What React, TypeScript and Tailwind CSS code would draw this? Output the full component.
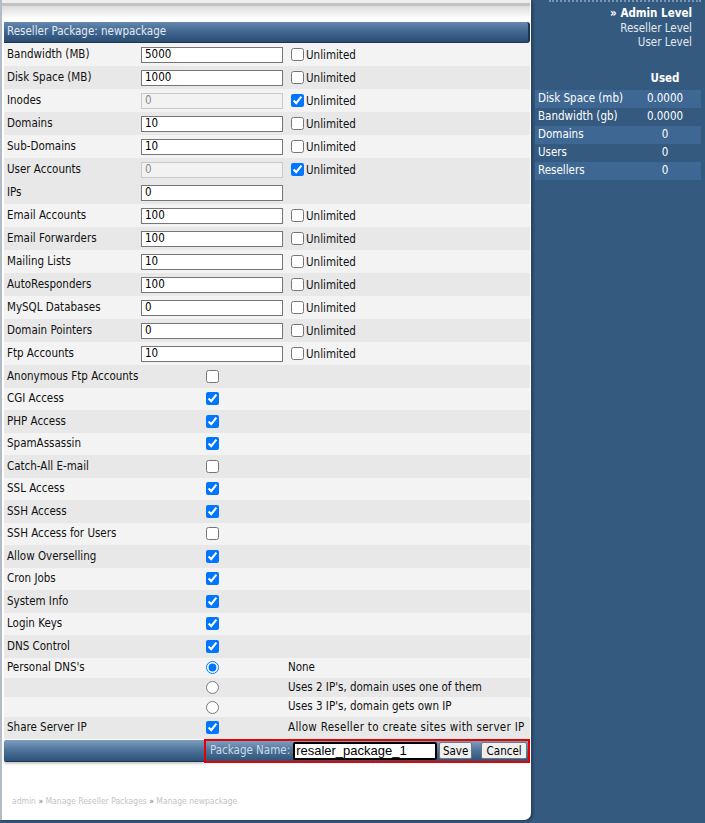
import React from "react";

type Num = { label: string; value: string; unl?: boolean; off?: boolean; dark: boolean };
type Chk = { label: string; on: boolean; dark: boolean };

const numbers: Num[] = [
  { label: "Bandwidth (MB)", value: "5000", unl: false, dark: false },
  { label: "Disk Space (MB)", value: "1000", unl: false, dark: true },
  { label: "Inodes", value: "0", unl: true, off: true, dark: false },
  { label: "Domains", value: "10", unl: false, dark: true },
  { label: "Sub-Domains", value: "10", unl: false, dark: false },
  { label: "User Accounts", value: "0", unl: true, off: true, dark: true },
  { label: "IPs", value: "0", dark: true },
  { label: "Email Accounts", value: "100", unl: false, dark: false },
  { label: "Email Forwarders", value: "100", unl: false, dark: true },
  { label: "Mailing Lists", value: "10", unl: false, dark: false },
  { label: "AutoResponders", value: "100", unl: false, dark: true },
  { label: "MySQL Databases", value: "0", unl: false, dark: false },
  { label: "Domain Pointers", value: "0", unl: false, dark: true },
  { label: "Ftp Accounts", value: "10", unl: false, dark: false },
];

const checks: Chk[] = [
  { label: "Anonymous Ftp Accounts", on: false, dark: true },
  { label: "CGI Access", on: true, dark: false },
  { label: "PHP Access", on: true, dark: true },
  { label: "SpamAssassin", on: true, dark: false },
  { label: "Catch-All E-mail", on: false, dark: true },
  { label: "SSL Access", on: true, dark: false },
  { label: "SSH Access", on: true, dark: true },
  { label: "SSH Access for Users", on: false, dark: false },
  { label: "Allow Overselling", on: true, dark: true },
  { label: "Cron Jobs", on: true, dark: false },
  { label: "System Info", on: true, dark: true },
  { label: "Login Keys", on: true, dark: false },
  { label: "DNS Control", on: true, dark: true },
];

const usage = [
  { label: "Disk Space (mb)", value: "0.0000", alt: true },
  { label: "Bandwidth (gb)", value: "0.0000", alt: false },
  { label: "Domains", value: "0", alt: true },
  { label: "Users", value: "0", alt: false },
  { label: "Resellers", value: "0", alt: true },
];

function Box({ on }: { on: boolean }) {
  return <input type="checkbox" defaultChecked={on} className="m-0 h-[13px] w-[13px]" />;
}

export default function App() {
  return (
    <div className="flex min-h-[823px] bg-[#355a80] font-['DejaVu_Sans_Condensed','DejaVu_Sans',sans-serif] text-[11.5px] text-[#111]">
      {/* main panel */}
      <div className="flex h-[820px] w-[531px] flex-col rounded-br-[7px] border-l-2 border-[#b3bcc6] bg-white pr-[1px] pl-[2px] shadow-[2px_1px_3px_rgba(0,0,0,0.3)]">
        <div className="-ml-[2px] h-[3px] bg-[#eeeeee]" />
        <div className="-ml-[2px] h-[3px] bg-[#c3c3c3]" />
        <div className="-ml-[2px] h-[13px] bg-[linear-gradient(to_bottom,#dcdcdc,#ffffff)]" />
        <div className="h-[3px]" />

        <div className="flex h-[21px] items-center rounded-r-[3px] border-r-2 border-b border-[#1d3550] bg-[linear-gradient(to_bottom,#6688ad_0%,#3f6590_50%,#2a4d72_100%)] pl-[3px] text-[#e2eaf2]">
          Reseller Package: newpackage
        </div>

        {numbers.map((r) => (
          <div key={r.label} className={`flex h-[23px] items-center ${r.dark ? "bg-[#e8e8e8]" : "bg-[#f3f3f3]"}`}>
            <div className="w-[137px] pl-[3px]">{r.label}</div>
            <div className="w-[146px]">
              <input
                readOnly
                value={r.value}
                className={`h-[16px] w-[142px] border px-[3px] text-[11.5px] outline-none ${
                  r.off ? "border-[#c9c9c9] bg-[#f2f2f2] text-[#8a8a8a]" : "border-[#767676] bg-white text-black"
                }`}
              />
            </div>
            {r.unl !== undefined && (
              <div className="flex items-center pl-[4px]">
                <Box on={r.unl} />
                <span className="mt-[3px] pl-[2px]">Unlimited</span>
              </div>
            )}
          </div>
        ))}

        {checks.map((r) => (
          <div key={r.label} className={`flex h-[22.5px] items-center ${r.dark ? "bg-[#e8e8e8]" : "bg-[#f3f3f3]"}`}>
            <div className="w-[137px] pl-[3px]">{r.label}</div>
            <div className="flex w-[146px] pl-[65px]">
              <Box on={r.on} />
            </div>
          </div>
        ))}

        <div className="flex h-[20px] items-center bg-[#f3f3f3]">
          <div className="w-[137px] pl-[3px]">Personal DNS's</div>
          <div className="flex w-[146px] pl-[65px]">
            <input type="radio" name="dns" defaultChecked className="m-0 h-[13px] w-[13px]" />
          </div>
          <div className="pl-[1px]">None</div>
        </div>
        <div className="flex h-[19.7px] items-center bg-[#e8e8e8]">
          <div className="w-[137px]" />
          <div className="flex w-[146px] pl-[65px]">
            <input type="radio" name="dns" className="m-0 h-[13px] w-[13px]" />
          </div>
          <div className="pl-[1px]">Uses 2 IP's, domain uses one of them</div>
        </div>
        <div className="flex h-[19.7px] items-center bg-[#f3f3f3]">
          <div className="w-[137px]" />
          <div className="flex w-[146px] pl-[65px]">
            <input type="radio" name="dns" className="m-0 h-[13px] w-[13px]" />
          </div>
          <div className="pl-[1px]">Uses 3 IP's, domain gets own IP</div>
        </div>
        <div className="flex h-[22px] items-center bg-[#e8e8e8]">
          <div className="w-[137px] pl-[3px]">Share Server IP</div>
          <div className="flex w-[146px] pl-[65px]">
            <Box on />
          </div>
          <div className="pl-[1px] tracking-[0.3px]">Allow Reseller to create sites with server IP</div>
        </div>

        {/* footer bar */}
        <div className="flex h-[24px]">
          <div className="my-[1px] w-[200px] rounded-l-[2px] border-b border-[#1d3550] bg-[linear-gradient(to_bottom,#7d9ec0_0%,#50759c_45%,#2d5277_100%)] shadow-[0_2px_2px_rgba(0,0,0,0.2)]" />
          <div className="flex flex-1 items-center border-2 border-[#e60000] bg-[linear-gradient(to_bottom,#7d9ec0_0%,#50759c_45%,#2d5277_100%)] pl-[4px]">
            <span className="text-[#cdd9e6]">Package Name:</span>
            <input
              readOnly
              value="resaler_package_1"
              className="ml-[3px] h-[18px] w-[144px] rounded-[2px] border-2 border-black bg-white px-[1px] font-['Liberation_Sans',sans-serif] text-[13px] text-black outline-none"
            />
            <button className="ml-[2px] h-[17px] w-[33px] rounded-[2px] border border-[#767676] bg-[#efefef] text-[11.5px] text-black">
              Save
            </button>
            <button className="ml-[9px] h-[17px] w-[46px] rounded-[2px] border border-[#767676] bg-[#efefef] text-[11.5px] text-black">
              Cancel
            </button>
          </div>
        </div>

        <div className="mt-[32px] pl-[8px] text-[8.5px] text-[#c4c4c4]">
          admin <span className="text-[#777]">»</span> Manage Reseller Packages <span className="text-[#777]">»</span> Manage newpackage
        </div>
      </div>

      {/* side panel */}
      <div className="flex-1 px-[4px]">
        <div className="ml-[14px] h-0 border-t-2 border-dotted border-[#7a95b3]" />
        <div className="pt-[4px] pr-[9px] text-right leading-[14.5px] text-[#e3e9f0]">
          <div className="font-bold text-white">» Admin Level</div>
          <div>Reseller Level</div>
          <div>User Level</div>
        </div>
        <div className="mt-[22px] flex h-[15px] items-center">
          <div className="w-[94px]" />
          <div className="flex-1 text-center font-bold text-white">Used</div>
        </div>
        <div className="mt-[3px]">
          {usage.map((u) => (
            <div key={u.label} className={`flex h-[18px] items-center text-white ${u.alt ? "bg-[#3e6893]" : ""}`}>
              <div className="w-[94px] pl-[3px]">{u.label}</div>
              <div className="flex-1 text-center">{u.value}</div>
            </div>
          ))}
        </div>
      </div>
    </div>
  );
}
